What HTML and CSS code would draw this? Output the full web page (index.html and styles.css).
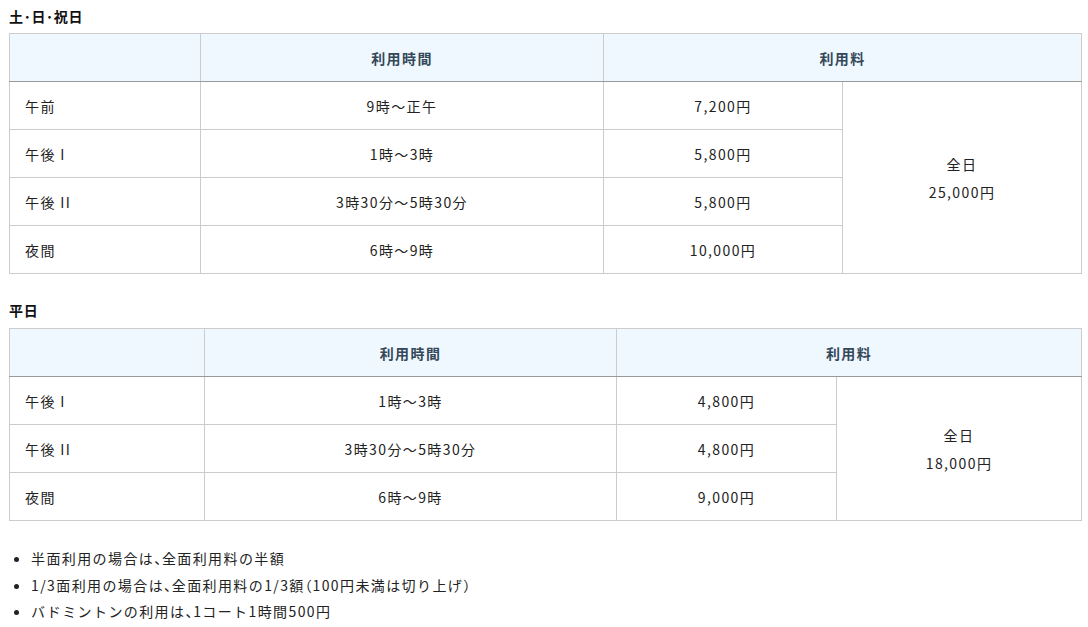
FILE: index.html
```html
<!DOCTYPE html>
<html lang="ja">
<head>
<meta charset="utf-8">
<link rel="stylesheet" href="styles.css">
</head>
<body>
<div class="page">
  <h3 class="title">土･日･祝日</h3>
  <table class="fee">
    <colgroup>
      <col class="c1a"><col class="c2a"><col class="c3a"><col class="c4a">
    </colgroup>
    <thead>
      <tr><th></th><th>利用時間</th><th colspan="2">利用料</th></tr>
    </thead>
    <tbody>
      <tr><td class="name">午前</td><td>9時～正午</td><td>7,200円</td><td rowspan="4" class="all">全日<br>25,000円</td></tr>
      <tr><td class="name">午後 I</td><td>1時～3時</td><td>5,800円</td></tr>
      <tr><td class="name">午後 II</td><td>3時30分～5時30分</td><td>5,800円</td></tr>
      <tr><td class="name">夜間</td><td>6時～9時</td><td>10,000円</td></tr>
    </tbody>
  </table>

  <h3 class="title second">平日</h3>
  <table class="fee">
    <colgroup>
      <col class="c1b"><col class="c2b"><col class="c3b"><col class="c4b">
    </colgroup>
    <thead>
      <tr><th></th><th>利用時間</th><th colspan="2">利用料</th></tr>
    </thead>
    <tbody>
      <tr><td class="name">午後 I</td><td>1時～3時</td><td>4,800円</td><td rowspan="3" class="all">全日<br>18,000円</td></tr>
      <tr><td class="name">午後 II</td><td>3時30分～5時30分</td><td>4,800円</td></tr>
      <tr><td class="name">夜間</td><td>6時～9時</td><td>9,000円</td></tr>
    </tbody>
  </table>

  <ul class="notes">
    <li>半面利用の場合は<span class="p">、</span>全面利用料の半額</li>
    <li>1/3面利用の場合は<span class="p">、</span>全面利用料の1/3額<span class="p">（</span>100円未満は切り上げ<span class="p">）</span></li>
    <li>バドミントンの利用は<span class="p">、</span>1コート1時間500円</li>
  </ul>
</div>
</body>
</html>
```
FILE: styles.css
```css
html, body {
  margin: 0;
  padding: 0;
  background: #fff;
}
body {
  font-family: "Noto Sans CJK JP", "Noto Sans", sans-serif;
  font-size: 14px;
  color: #222;
  letter-spacing: 0.1em;
}
.page {
  padding: 4px 0 0 9px;
  width: 1072px;
}
.title {
  margin: 0;
  height: 29px;
  line-height: 24px;
  font-size: 14px;
  font-weight: bold;
  color: #111;
  letter-spacing: 0.05em;
}
.title.second {
  margin-top: 21px;
  height: 33px;
  line-height: 30px;
}
.fee {
  width: 1072px;
  border-collapse: collapse;
  table-layout: fixed;
}
.fee th, .fee td {
  border: 1px solid #cccccc;
  text-align: center;
  vertical-align: middle;
  padding: 0;
  height: 47px;
  line-height: 28px;
}
.fee th {
  background: #eef8fe;
  color: #34485a;
  font-weight: bold;
  border-bottom: 1px solid #999;
}
.fee td.name {
  text-align: left;
  padding-left: 15px;
}
.c1a { width: 191px; }
.c2a { width: 403px; }
.c3a { width: 239px; }
.c4a { width: 239px; }
.c1b { width: 195px; }
.c2b { width: 412px; }
.c3b { width: 220px; }
.c4b { width: 245px; }
.notes {
  margin: 24px 0 0 0;
  padding-left: 22px;
}
.notes li {
  line-height: 26.5px;
}
.notes .p {
  font-feature-settings: "halt";
  letter-spacing: 0.05em;
}
```
